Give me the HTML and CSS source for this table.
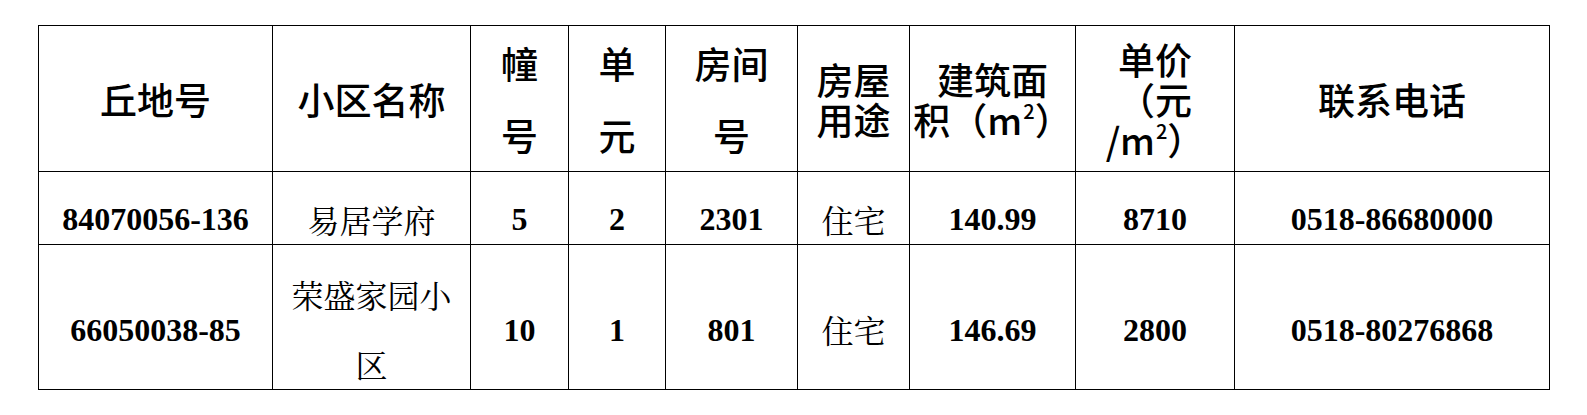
FILE: index.html
```html
<!DOCTYPE html>
<html lang="zh-CN">
<head>
<meta charset="utf-8">
<title>房屋信息</title>
<link rel="stylesheet" href="styles.css">
</head>
<body>
<table class="grid">
  <colgroup>
    <col class="c1"><col class="c2"><col class="c3"><col class="c4"><col class="c5"><col class="c6"><col class="c7"><col class="c8"><col class="c9">
  </colgroup>
  <thead>
    <tr class="head">
      <th class="h-low h-indent">丘地号</th>
      <th class="h-low">小区名称</th>
      <th class="h-wide"><span class="ln">幢</span><span class="ln ln-gap">号</span></th>
      <th class="h-wide"><span class="ln">单</span><span class="ln ln-gap">元</span></th>
      <th class="h-wide"><span class="ln">房间</span><span class="ln ln-gap">号</span></th>
      <th class="h-tight"><span class="ln">房屋</span><span class="ln">用途</span></th>
      <th class="h-tight"><span class="ln">建筑面</span><span class="ln">积（m<sup>2</sup>）</span></th>
      <th class="h-tight h-up"><span class="ln">单价</span><span class="ln">（元</span><span class="ln">/m<sup>2</sup>）</span></th>
      <th class="h-mid">联系电话</th>
    </tr>
  </thead>
  <tbody>
    <tr class="r1">
      <td class="num">84070056-136</td>
      <td class="cjk">易居学府</td>
      <td class="num">5</td>
      <td class="num">2</td>
      <td class="num">2301</td>
      <td class="cjk">住宅</td>
      <td class="num">140.99</td>
      <td class="num">8710</td>
      <td class="num">0518-86680000</td>
    </tr>
    <tr class="r2">
      <td class="num">66050038-85</td>
      <td class="cjk"><span class="ln">荣盛家园小</span><span class="ln ln-gap2">区</span></td>
      <td class="num">10</td>
      <td class="num">1</td>
      <td class="num">801</td>
      <td class="cjk">住宅</td>
      <td class="num">146.69</td>
      <td class="num">2800</td>
      <td class="num">0518-80276868</td>
    </tr>
  </tbody>
</table>
</body>
</html>
```

FILE: styles.css
```css
html, body {
  margin: 0;
  padding: 0;
  background: #ffffff;
}

body {
  padding: 25px 0 0 38px;
  color: #000000;
}

.grid {
  border-collapse: collapse;
  table-layout: fixed;
  width: 1512px;
}

.grid th,
.grid td {
  border: 1px solid #000000;
  padding: 0;
  text-align: center;
  vertical-align: middle;
  overflow: hidden;
}

.c1 { width: 234px; }
.c2 { width: 198px; }
.c3 { width: 98px; }
.c4 { width: 97px; }
.c5 { width: 132px; }
.c6 { width: 112px; }
.c7 { width: 166px; }
.c8 { width: 159px; }
.c9 { width: 315px; }

.head { height: 146px; }
.r1 { height: 73px; }
.r2 { height: 145px; }

.head th {
  font-family: "Noto Sans CJK SC", "Noto Sans", sans-serif;
  font-size: 37px;
  font-weight: 500;
  line-height: 36px;
}

.ln {
  display: block;
  white-space: nowrap;
}

.h-low { padding-top: 28px; }
.h-indent { padding-left: 34px; }
.h-wide { padding-top: 30px; }
.h-wide .ln-gap { margin-top: 36px; }
.h-tight { line-height: 40px; }
.h-tight .ln { line-height: 40px; }
.h-up { padding-bottom: 14px; }

.head sup {
  font-size: 20px;
  line-height: 0;
  vertical-align: 16px;
  margin-left: 1px;
}

.grid td {
  font-size: 32px;
  line-height: 36px;
}

.r1 td { padding-top: 21px; }
.r2 td { padding-top: 25px; }

.num {
  font-family: "Liberation Serif", "Times New Roman", serif;
  font-weight: bold;
}

.cjk {
  font-family: "Noto Serif CJK SC", "Liberation Serif", "Noto Sans CJK SC", serif;
  font-weight: normal;
}

.r2 .cjk { padding-top: 23px; }

.ln-gap2 { margin-top: 34px; }
```
